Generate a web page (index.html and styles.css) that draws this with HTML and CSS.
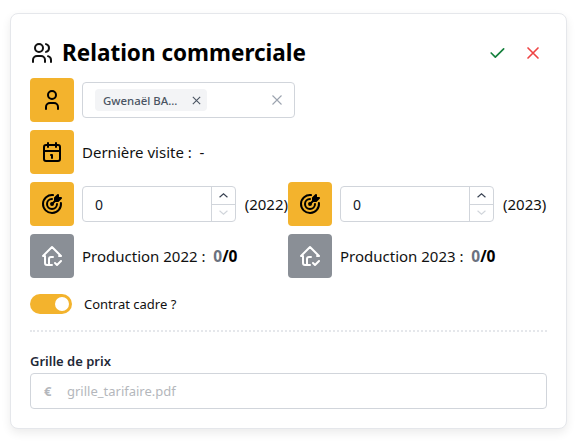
FILE: index.html
```html
<!DOCTYPE html>
<html lang="fr">
<head>
<meta charset="utf-8">
<title>Relation commerciale</title>
<link rel="stylesheet" href="styles.css">
</head>
<body>
<section class="card">
  <header class="head">
    <svg class="head-icon" viewBox="0 0 24 24" fill="none" stroke="currentColor" stroke-width="2" stroke-linecap="round" stroke-linejoin="round"><circle cx="9" cy="7" r="4"/><path d="M3 21v-2a4 4 0 0 1 4-4h4a4 4 0 0 1 4 4v2"/><path d="M16 3.13a4 4 0 0 1 0 7.75"/><path d="M21 21v-2a4 4 0 0 0-3-3.85"/></svg>
    <h1 class="title">Relation commerciale</h1>
    <div class="actions">
      <svg class="act ok" viewBox="0 0 24 24" fill="none" stroke="currentColor" stroke-width="2" stroke-linecap="round" stroke-linejoin="round"><path d="M5 12l5 5L20 7"/></svg>
      <svg class="act no" viewBox="0 0 24 24" fill="none" stroke="currentColor" stroke-width="2" stroke-linecap="round" stroke-linejoin="round"><path d="M18 6 6 18M6 6l12 12"/></svg>
    </div>
  </header>

  <div class="row">
    <span class="tile"><svg viewBox="0 0 24 24" fill="none" stroke="currentColor" stroke-width="2" stroke-linecap="round" stroke-linejoin="round"><circle cx="12" cy="7" r="4"/><path d="M6 21v-2a4 4 0 0 1 4-4h4a4 4 0 0 1 4 4v2"/></svg></span>
    <div class="select">
      <span class="chip">Gwenaël BA...<svg class="x" viewBox="0 0 12 12" fill="none" stroke="currentColor" stroke-width="1.2"><path d="M2 2l8 8M10 2l-8 8"/></svg></span>
      <svg class="clear" viewBox="0 0 12 12" fill="none" stroke="currentColor" stroke-width="1.1"><path d="M1.5 1.5l9 9M10.500 1.500l-9 9"/></svg>
    </div>
  </div>

  <div class="row">
    <span class="tile"><svg viewBox="0 0 24 24" fill="none" stroke="currentColor" stroke-width="2" stroke-linecap="round" stroke-linejoin="round"><rect x="4" y="5" width="16" height="16" rx="2"/><path d="M16 3v4M8 3v4M4 11h16M11 15h1v3"/></svg></span>
    <span class="text">Dernière visite :&nbsp; -</span>
  </div>

  <div class="pair">
    <div class="row">
      <span class="tile"><svg viewBox="0 0 24 24" fill="none" stroke="currentColor" stroke-width="2" stroke-linecap="round" stroke-linejoin="round"><path d="M11 12a1 1 0 1 0 2 0a1 1 0 1 0-2 0"/><path d="M12 7a5 5 0 1 0 5 5"/><path d="M13 3.055a9 9 0 1 0 7.941 7.945"/><path d="M15 6v3h3l3-3h-3V3z" fill="currentColor"/><path d="M15 9l-3 3"/></svg></span>
      <div class="num"><span class="num-val">0</span><span class="spin"><span class="up"><svg viewBox="0 0 12 8" fill="none" stroke="currentColor" stroke-width="1.300"><path d="M1.500 6 6 2l4.500 4"/></svg></span><span class="down"><svg viewBox="0 0 12 8" fill="none" stroke="currentColor" stroke-width="1.300"><path d="M1.500 2 6 6l4.500-4"/></svg></span></span></div>
      <span class="text year">(2022)</span>
    </div>
    <div class="row">
      <span class="tile"><svg viewBox="0 0 24 24" fill="none" stroke="currentColor" stroke-width="2" stroke-linecap="round" stroke-linejoin="round"><path d="M11 12a1 1 0 1 0 2 0a1 1 0 1 0-2 0"/><path d="M12 7a5 5 0 1 0 5 5"/><path d="M13 3.055a9 9 0 1 0 7.941 7.945"/><path d="M15 6v3h3l3-3h-3V3z" fill="currentColor"/><path d="M15 9l-3 3"/></svg></span>
      <div class="num"><span class="num-val">0</span><span class="spin"><span class="up"><svg viewBox="0 0 12 8" fill="none" stroke="currentColor" stroke-width="1.300"><path d="M1.500 6 6 2l4.500 4"/></svg></span><span class="down"><svg viewBox="0 0 12 8" fill="none" stroke="currentColor" stroke-width="1.300"><path d="M1.500 2 6 6l4.500-4"/></svg></span></span></div>
      <span class="text year">(2023)</span>
    </div>
  </div>

  <div class="pair">
    <div class="row">
      <span class="tile grey"><svg viewBox="0 0 24 24" fill="none" stroke="currentColor" stroke-width="2" stroke-linecap="round" stroke-linejoin="round"><path d="M9 21V15a2 2 0 0 1 2-2h2M5 12H3l9-9 9 9h-2M5 12v7a2 2 0 0 0 2 2h5M15 19l2 2 4-4"/></svg></span>
      <span class="text">Production 2022 :&nbsp; <b class="score"><span class="muted">0</span>/0</b></span>
    </div>
    <div class="row">
      <span class="tile grey"><svg viewBox="0 0 24 24" fill="none" stroke="currentColor" stroke-width="2" stroke-linecap="round" stroke-linejoin="round"><path d="M9 21V15a2 2 0 0 1 2-2h2M5 12H3l9-9 9 9h-2M5 12v7a2 2 0 0 0 2 2h5M15 19l2 2 4-4"/></svg></span>
      <span class="text">Production 2023 :&nbsp; <b class="score"><span class="muted">0</span>/0</b></span>
    </div>
  </div>

  <div class="switch-row">
    <span class="switch"><span class="knob"></span></span>
    <span class="switch-label">Contrat cadre ?</span>
  </div>

  <hr class="divider">

  <label class="field-label">Grille de prix</label>
  <div class="file"><span class="euro">€</span><span class="file-name">grille_tarifaire.pdf</span></div>
</section>
</body>
</html>
```

FILE: styles.css
```css
* { box-sizing: border-box; }
html, body { margin: 0; height: 100%; background: #fff; }
body {
  padding: 13px 10px;
  font-family: "Noto Sans", sans-serif;
  color: #111827;
}
.card {
  width: 557px;
  height: 416px;
  padding: 20px 19px;
  background: #fff;
  border: 1px solid #e5e7eb;
  border-radius: 8px;
  box-shadow: 0 4px 10px rgba(0, 0, 0, .08);
}
.head {
  display: flex;
  align-items: center;
  height: 36px;
  margin-top: 1px;
  margin-bottom: 7px;
}
.head-icon { width: 24px; height: 24px; margin-right: 8px; margin-bottom: 1px; color: #111; }
.title { margin: 0; font-size: 22.5px; font-weight: 700; color: #000; line-height: 36px; }
.actions { margin-left: auto; margin-right: 4px; margin-bottom: 1px; display: flex; gap: 16px; }
.act { width: 20px; height: 20px; }
.ok { color: #15803d; }
.no { color: #ef4444; }
.row { display: flex; align-items: center; height: 44px; margin-bottom: 8px; }
.pair { display: grid; grid-template-columns: 258px 259px; }
.tile {
  flex: none;
  display: flex;
  align-items: center;
  justify-content: center;
  width: 44px;
  height: 44px;
  margin-right: 8px;
  border-radius: 4px;
  background: #f3b32d;
  color: #000;
}
.tile svg { width: 24px; height: 24px; }
.tile.grey { background: #8a8f96; color: #fff; }
.text { font-size: 15px; color: #111; white-space: nowrap; }
.select {
  display: flex;
  align-items: center;
  justify-content: space-between;
  width: 213px;
  height: 36px;
  padding: 0 11px 0 12px;
  border: 1px solid #d1d5db;
  border-radius: 4px;
}
.chip {
  display: flex;
  align-items: center;
  gap: 14px;
  height: 22px;
  padding: 0 5px 0 8px;
  border-radius: 4px;
  background: #f3f4f6;
  font-size: 11.4px;
  font-weight: 500;
  color: #4b5563;
}
.x { width: 11px; height: 11px; }
.clear { width: 12px; height: 12px; color: #9ca3af; }
.num {
  display: flex;
  justify-content: space-between;
  align-items: center;
  width: 154px;
  height: 36px;
  border: 1px solid #d1d5db;
  border-radius: 4px;
  background: #fff;
}
.num-val { padding-left: 12px; font-size: 14px; }
.spin {
  display: flex;
  flex-direction: column;
  flex: none;
  width: 24px;
  height: 100%;
  border-left: 1px solid #d1d5db;
}
.up, .down { flex: 1; display: flex; align-items: center; justify-content: center; }
.up { border-bottom: 1px solid #d1d5db; color: #374151; }
.down { color: #d1d5db; }
.spin svg { width: 11px; height: 7px; }
.year { margin-left: 9px; }
.score { font-size: 15.500px; font-weight: 700; color: #000; }
.muted { color: #6b7280; }
.switch-row { display: flex; align-items: center; height: 20px; margin-top: 8px; }
.switch {
  display: flex;
  align-items: center;
  justify-content: flex-end;
  width: 42px;
  height: 20px;
  padding-right: 3px;
  border-radius: 10px;
  background: #f3b32d;
}
.knob { width: 14px; height: 14px; border-radius: 50%; background: #fff; }
.switch-label { margin-left: 12px; font-size: 13px; color: #111; }
.divider { height: 0; margin: 16px 0 0; border: 0; border-top: 2px dotted #e5e7eb; }
.field-label { display: block; margin-top: 20px; height: 21px; font-size: 13px; font-weight: 600; line-height: 18px; color: #1f2937; }
.file {
  display: flex;
  align-items: center;
  height: 36px;
  padding-left: 13px;
  border: 1px solid #d1d5db;
  border-radius: 4px;
  font-size: 13px;
  color: #b4b7bc;
}
.euro { width: 23px; font-size: 13px; font-weight: 700; }
```
